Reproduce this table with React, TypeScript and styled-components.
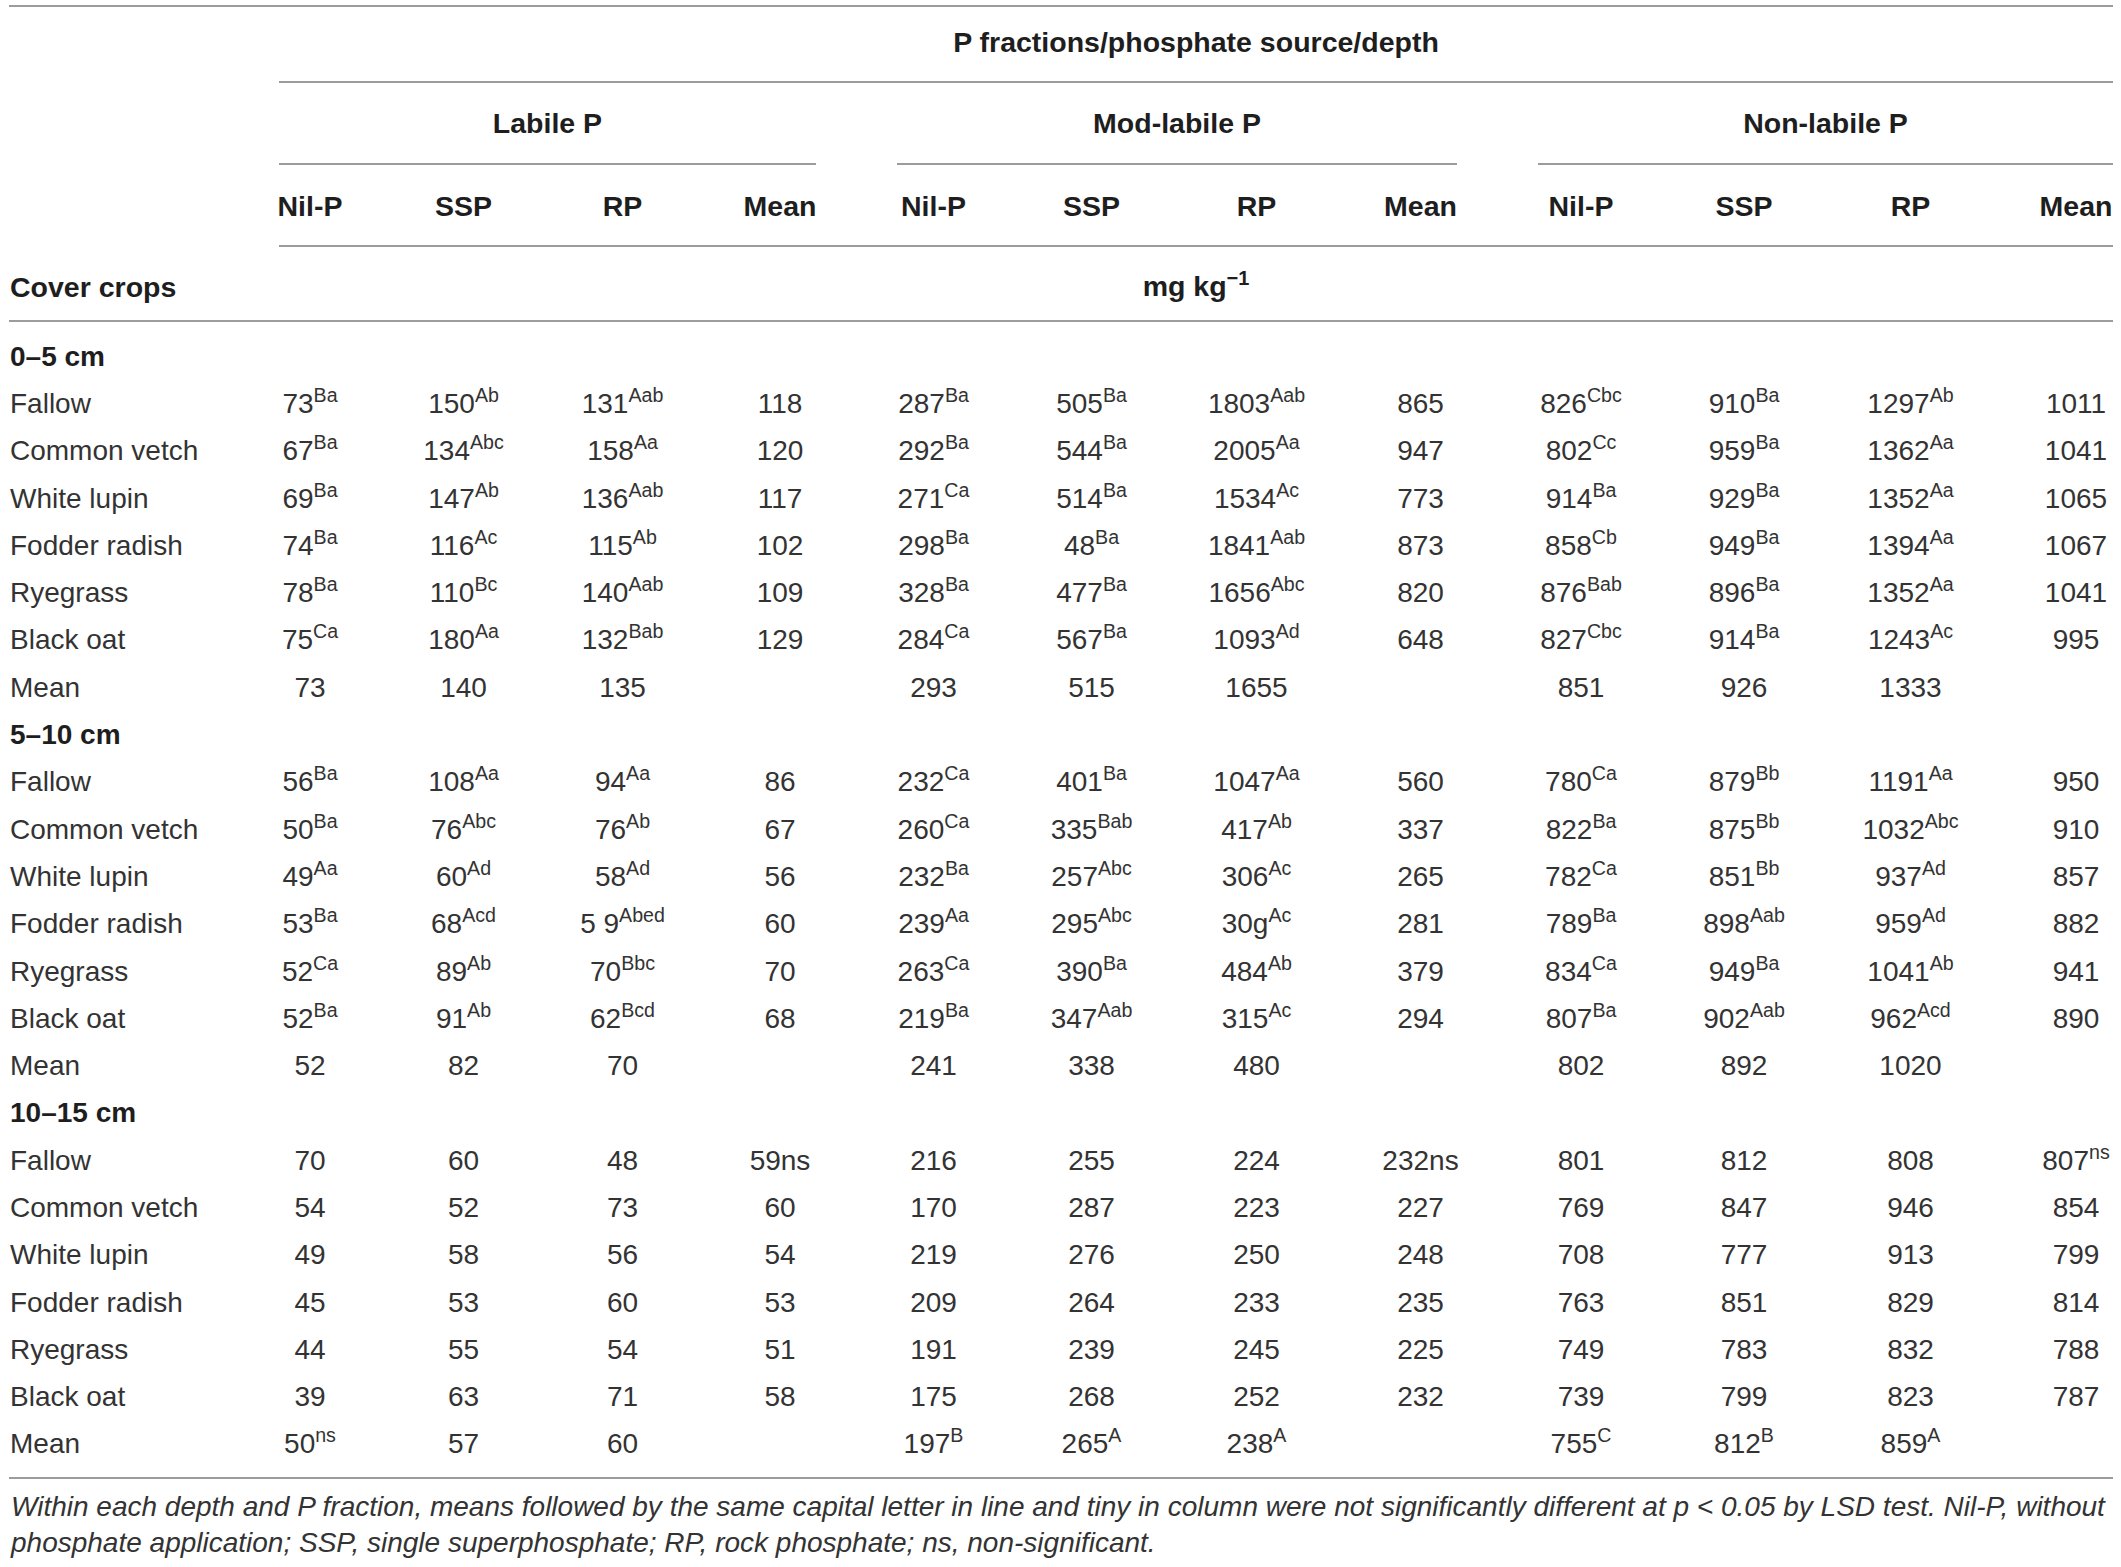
import styled, { createGlobalStyle } from "styled-components";

const GlobalStyle = createGlobalStyle`
    html, body {
        margin: 0;
        padding: 0;
        background: #ffffff;
        overflow: hidden;
    }
    body {
        font-family: "Liberation Sans", Arial, Helvetica, sans-serif;
        color: #333333;
    }
`

// label column + 12 data columns (Nil-P, SSP, RP, Mean x 3 fractions)
const COLUMNS = "226px 150px 157px 161px 154px 153px 163px 167px 161px 160px 166px 167px 119px";
const RULE = "2px solid #9c9c9c";

const Page = styled.div`
    width: 2104px;
    margin-left: 9px;
`

const Head = styled.div`
    display: grid;
    grid-template-columns: ${COLUMNS};
    grid-template-rows: 76px 82px 82px 75px;
    margin-top: 5px;
    border-top: ${RULE};
    font-size: 28.5px;
    font-weight: bold;
    color: #1e1e1e;
`

const CoverCell = styled.div`
    grid-column: 1;
    grid-row: 1 / 5;
    display: flex;
    align-items: flex-end;
    padding: 0 0 17px 1px;
    border-bottom: ${RULE};
    line-height: 32px;
`

const SpanHead = styled.div<{ $from: number; $to: number; $row: number; $inL: number; $inR: number; $pad?: number }>`
    grid-column: ${({ $from, $to }) => `${$from} / ${$to}`};
    grid-row: ${({ $row }) => $row};
    margin-left: ${({ $inL }) => $inL}px;
    margin-right: ${({ $inR }) => $inR}px;
    display: flex;
    align-items: center;
    justify-content: center;
    padding-bottom: ${({ $pad }) => $pad ?? 0}px;
    border-bottom: ${RULE};
`

const ColHead = styled.div<{ $col: number; $edge?: boolean }>`
    grid-column: ${({ $col }) => $col};
    grid-row: 3;
    display: flex;
    align-items: center;
    justify-content: center;
    padding-left: ${({ $edge }) => ($edge ? 45 : 0)}px;
`

const RuleLine = styled.div`
    grid-column: 2 / 14;
    grid-row: 3;
    align-self: end;
    height: 0;
    margin-left: 44px;
    border-bottom: ${RULE};
`

const UnitCell = styled.div`
    grid-column: 2 / 14;
    grid-row: 4;
    display: flex;
    align-items: center;
    justify-content: center;
    padding: 6px 0 0 44px;
    border-bottom: ${RULE};
`

const Body = styled.div`
    display: grid;
    grid-template-columns: ${COLUMNS};
    grid-auto-rows: 47.3px;
    padding: 11px 0 9px;
    border-bottom: ${RULE};
    font-size: 28px;
`

const Label = styled.div<{ $section?: boolean }>`
    grid-column: 1;
    display: flex;
    align-items: center;
    padding-left: 1px;
    white-space: nowrap;
    font-weight: ${({ $section }) => ($section ? "bold" : "normal")};
    color: ${({ $section }) => ($section ? "#1e1e1e" : "#333333")};
`

const SectionFill = styled.div`
    grid-column: 2 / 14;
`

const Cell = styled.div<{ $edge?: boolean }>`
    display: flex;
    align-items: center;
    justify-content: center;
    white-space: nowrap;
    padding-left: ${({ $edge }) => ($edge ? 45 : 0)}px;
`

const Sup = styled.sup`
    font-size: 0.7em;
    vertical-align: 11px;
    line-height: 0;
`

const Note = styled.p`
    margin: 10px -8px 0 2px;
    font-size: 28px;
    font-style: italic;
    line-height: 36px;
    color: #333333;
`

type Section = { depth: string; rows: [string, string[]][] };

const CROPS = ["Fallow", "Common vetch", "White lupin", "Fodder radish", "Ryegrass", "Black oat", "Mean"];

const table = (depth: string, data: string[]): Section => ({
    depth,
    rows: CROPS.map((crop, i) => [crop, data[i].split(" | ")]),
});

const SECTIONS: Section[] = [
    table("0–5 cm", [
        "73^Ba | 150^Ab | 131^Aab | 118 | 287^Ba | 505^Ba | 1803^Aab | 865 | 826^Cbc | 910^Ba | 1297^Ab | 1011",
        "67^Ba | 134^Abc | 158^Aa | 120 | 292^Ba | 544^Ba | 2005^Aa | 947 | 802^Cc | 959^Ba | 1362^Aa | 1041",
        "69^Ba | 147^Ab | 136^Aab | 117 | 271^Ca | 514^Ba | 1534^Ac | 773 | 914^Ba | 929^Ba | 1352^Aa | 1065",
        "74^Ba | 116^Ac | 115^Ab | 102 | 298^Ba | 48^Ba | 1841^Aab | 873 | 858^Cb | 949^Ba | 1394^Aa | 1067",
        "78^Ba | 110^Bc | 140^Aab | 109 | 328^Ba | 477^Ba | 1656^Abc | 820 | 876^Bab | 896^Ba | 1352^Aa | 1041",
        "75^Ca | 180^Aa | 132^Bab | 129 | 284^Ca | 567^Ba | 1093^Ad | 648 | 827^Cbc | 914^Ba | 1243^Ac | 995",
        "73 | 140 | 135 |  | 293 | 515 | 1655 |  | 851 | 926 | 1333 | ",
    ]),
    table("5–10 cm", [
        "56^Ba | 108^Aa | 94^Aa | 86 | 232^Ca | 401^Ba | 1047^Aa | 560 | 780^Ca | 879^Bb | 1191^Aa | 950",
        "50^Ba | 76^Abc | 76^Ab | 67 | 260^Ca | 335^Bab | 417^Ab | 337 | 822^Ba | 875^Bb | 1032^Abc | 910",
        "49^Aa | 60^Ad | 58^Ad | 56 | 232^Ba | 257^Abc | 306^Ac | 265 | 782^Ca | 851^Bb | 937^Ad | 857",
        "53^Ba | 68^Acd | 5 9^Abed | 60 | 239^Aa | 295^Abc | 30g^Ac | 281 | 789^Ba | 898^Aab | 959^Ad | 882",
        "52^Ca | 89^Ab | 70^Bbc | 70 | 263^Ca | 390^Ba | 484^Ab | 379 | 834^Ca | 949^Ba | 1041^Ab | 941",
        "52^Ba | 91^Ab | 62^Bcd | 68 | 219^Ba | 347^Aab | 315^Ac | 294 | 807^Ba | 902^Aab | 962^Acd | 890",
        "52 | 82 | 70 |  | 241 | 338 | 480 |  | 802 | 892 | 1020 | ",
    ]),
    table("10–15 cm", [
        "70 | 60 | 48 | 59ns | 216 | 255 | 224 | 232ns | 801 | 812 | 808 | 807^ns",
        "54 | 52 | 73 | 60 | 170 | 287 | 223 | 227 | 769 | 847 | 946 | 854",
        "49 | 58 | 56 | 54 | 219 | 276 | 250 | 248 | 708 | 777 | 913 | 799",
        "45 | 53 | 60 | 53 | 209 | 264 | 233 | 235 | 763 | 851 | 829 | 814",
        "44 | 55 | 54 | 51 | 191 | 239 | 245 | 225 | 749 | 783 | 832 | 788",
        "39 | 63 | 71 | 58 | 175 | 268 | 252 | 232 | 739 | 799 | 823 | 787",
        "50^ns | 57 | 60 |  | 197^B | 265^A | 238^A |  | 755^C | 812^B | 859^A | ",
    ]),
];

const GROUPS = [
    { name: "Labile P", from: 2, to: 6, inL: 44, inR: 41 },
    { name: "Mod-labile P", from: 6, to: 10, inL: 40, inR: 44 },
    { name: "Non-labile P", from: 10, to: 14, inL: 37, inR: 0 },
];

const SOURCES = ["Nil-P", "SSP", "RP", "Mean"];

const Value = ({ text }: { text: string }) => {
    const [num, sup] = text.trim().split("^");
    return <span>{num}{sup && <Sup>{sup}</Sup>}</span>;
}

const App = () => {
    return <>
        <GlobalStyle />
        <Page>
            <Head>
                <CoverCell>Cover crops</CoverCell>
                <SpanHead $from={2} $to={14} $row={1} $inL={44} $inR={0} $pad={4}>
                    P fractions/phosphate source/depth
                </SpanHead>
                {GROUPS.map((g) => (
                    <SpanHead key={g.name} $from={g.from} $to={g.to} $row={2} $inL={g.inL} $inR={g.inR}>
                        {g.name}
                    </SpanHead>
                ))}
                {GROUPS.flatMap((g, gi) => SOURCES.map((s, si) => {
                    const col = 2 + gi * 4 + si;
                    return <ColHead key={col} $col={col} $edge={col === 13}>{s}</ColHead>;
                }))}
                <RuleLine />
                <UnitCell>
                    <span>mg kg<Sup>−1</Sup></span>
                </UnitCell>
            </Head>
            <Body>
                {SECTIONS.map((section) => [
                    <Label key={section.depth} $section>{section.depth}</Label>,
                    <SectionFill key={section.depth + "-fill"} />,
                    ...section.rows.flatMap(([crop, values]) => [
                        <Label key={section.depth + crop}>{crop}</Label>,
                        ...values.map((v, i) => (
                            <Cell key={section.depth + crop + i} $edge={i === 11}>
                                <Value text={v} />
                            </Cell>
                        )),
                    ]),
                ])}
            </Body>
            <Note>
                Within each depth and P fraction, means followed by the same capital letter in line and tiny in column were not significantly different at p &lt; 0.05 by LSD test. Nil-P, without phosphate application; SSP, single superphosphate; RP, rock phosphate; ns, non-significant.
            </Note>
        </Page>
    </>
}

export default App;
